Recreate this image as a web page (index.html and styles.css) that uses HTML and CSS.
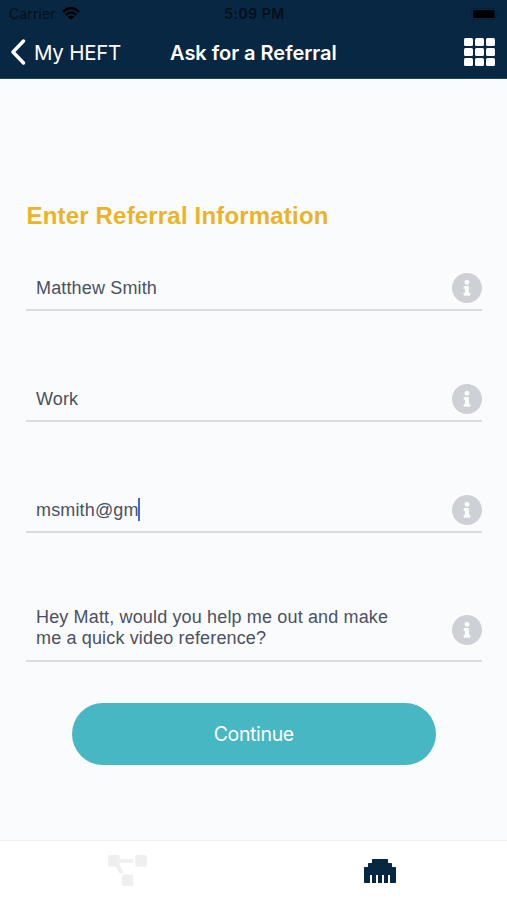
FILE: index.html
```
<!DOCTYPE html>
<html lang="en">
<head>
<meta charset="utf-8">
<title>Ask for a Referral</title>
<link rel="stylesheet" href="styles.css">
</head>
<body>
<svg width="0" height="0" class="sprite">
  <symbol id="info" viewBox="8 8 496 496"><path d="M256 8C119.043 8 8 119.083 8 256c0 136.997 111.043 248 248 248s248-111.003 248-248C504 119.083 392.957 8 256 8zm0 110c23.196 0 42 18.804 42 42s-18.804 42-42 42-42-18.804-42-42 18.804-42 42-42zm56 254c0 6.627-5.373 12-12 12h-88c-6.627 0-12-5.373-12-12v-24c0-6.627 5.373-12 12-12h12v-64h-12c-6.627 0-12-5.373-12-12v-24c0-6.627 5.373-12 12-12h64c6.627 0 12 5.373 12 12v100h12c6.627 0 12 5.373 12 12v24z"/></symbol>
</svg>
<header class="header">
  <div class="status">
    <div class="carrier"><span class="carrier-name">Carrier</span>
      <svg class="wifi" viewBox="0 0 18 13"><path d="M1 4.8Q9-2.3 17 4.8M3.7 7.8Q9 3.2 14.3 7.8" fill="none" stroke="#000" stroke-width="2.4"/><path d="M5.9 9.7Q9 7.2 12.1 9.7L9 12.8z"/></svg>
    </div>
    <span class="time">5:09 PM</span>
    <svg class="battery" viewBox="0 0 29 12"><rect x=".5" y=".5" width="24.5" height="11" rx="3" fill="none" stroke="#05203a"/><rect x="2" y="2" width="21.5" height="8" rx="1.5"/><path d="M26.5 4q2 2 0 4z" fill="#05203a"/></svg>
  </div>
  <nav class="nav">
    <a class="back"><svg class="chevron" viewBox="0 0 16 26"><path d="M13.5 2 3 13l10.5 11" fill="none" stroke="#fff" stroke-width="3.4" stroke-linecap="round" stroke-linejoin="round"/></svg><span class="back-label">My HEFT</span></a>
    <h1 class="title">Ask for a Referral</h1>
    <div class="grid-icon"><i></i><i></i><i></i><i></i><i></i><i></i><i></i><i></i><i></i></div>
  </nav>
</header>
<main class="main">
  <h2 class="heading">Enter Referral Information</h2>
  <div class="field"><span class="value">Matthew Smith</span><svg class="info"><use href="#info"/></svg></div>
  <div class="field"><span class="value">Work</span><svg class="info"><use href="#info"/></svg></div>
  <div class="field"><span class="value">msmith@gm</span><span class="caret"></span><svg class="info"><use href="#info"/></svg></div>
  <div class="field message"><span class="value">Hey Matt, would you help me out and make<br>me a quick video reference?</span><svg class="info"><use href="#info"/></svg></div>
  <button class="continue">Continue</button>
</main>
<footer class="tabs">
  <svg class="tab-diagram" viewBox="0 0 640 512"><path d="M384 320H256c-17.67 0-32 14.33-32 32v128c0 17.67 14.33 32 32 32h128c17.67 0 32-14.33 32-32V352c0-17.67-14.33-32-32-32zM192 32c0-17.67-14.33-32-32-32H32C14.33 0 0 14.33 0 32v128c0 17.67 14.33 32 32 32h95.72l73.16 128.04C211.98 300.98 232.4 288 256 288h.28L192 175.51V128h224V64H192V32zM608 0H480c-17.67 0-32 14.33-32 32v128c0 17.67 14.33 32 32 32h128c17.67 0 32-14.33 32-32V32c0-17.67-14.33-32-32-32z"/></svg>
  <svg class="tab-ethernet" viewBox="0 64 512 384"><path d="M496 192h-48v-48c0-8.8-7.2-16-16-16h-48V80c0-8.8-7.2-16-16-16H144c-8.8 0-16 7.2-16 16v48H80c-8.8 0-16 7.2-16 16v48H16c-8.8 0-16 7.2-16 16v224c0 8.8 7.2 16 16 16h80V320h32v128h64V320h32v128h64V320h32v128h64V320h32v128h80c8.8 0 16-7.2 16-16V208c0-8.8-7.2-16-16-16z"/></svg>
</footer>
</body>
</html>
```
FILE: styles.css
```
* { box-sizing: border-box; }
body {
  margin: 0;
  width: 507px;
  height: 900px;
  display: flex;
  flex-direction: column;
  overflow: hidden;
  background: #fafbfd;
  font-family: "Liberation Sans", Arial, sans-serif;
}
svg { display: block; flex: none; }
.sprite { position: absolute; }
.header {
  height: 79px;
  background: #082742;
  border-bottom: 1px solid #1f4660;
  font-family: Inter, sans-serif;
}
.status {
  height: 27px;
  display: grid;
  grid-template-columns: 1fr auto 1fr;
  align-items: center;
  padding: 0 7px 0 9px;
  font-size: 14px;
  line-height: 27px;
  color: #03101c;
}
.carrier { display: flex; align-items: center; gap: 5px; }
.carrier-name { width: 48px; white-space: nowrap; letter-spacing: 0.1px; }
.wifi { width: 18px; height: 13px; }
.time { font-weight: 600; font-size: 14px; letter-spacing: 0.5px; }
.battery { width: 29px; height: 12px; justify-self: end; }
.nav {
  height: 51px;
  display: grid;
  grid-template-columns: 160px auto 1fr;
  align-items: center;
  padding: 0 12px 0 10px;
  color: #fff;
}
.back { display: flex; align-items: center; gap: 8px; }
.chevron { width: 16px; height: 26px; margin-top: -1px; }
.back-label { font-size: 20.5px; letter-spacing: -0.25px; white-space: nowrap; }
.title { margin: 0; font-size: 20px; font-weight: 600; white-space: nowrap; letter-spacing: -0.02px; }
.grid-icon {
  justify-self: end;
  width: 31px;
  height: 28px;
  margin-top: -1px;
  display: grid;
  grid-template-columns: repeat(3, 1fr);
  gap: 1.5px;
}
.grid-icon i { background: #fff; border-radius: 1.5px; }
.main { flex: 1; padding: 122px 25px 0 26px; }
.heading {
  margin: 0 0 33px;
  height: 30px;
  padding-left: 0.5px;
  font-size: 24px;
  line-height: 30px;
  font-weight: 700;
  letter-spacing: 0.18px;
  color: #ebb328;
  white-space: nowrap;
}
.field {
  height: 47px;
  margin-bottom: 64px;
  padding: 2px 0.5px 0 10px;
  display: flex;
  align-items: center;
  border-bottom: 2px solid #dbdcde;
}
.value { margin-top: 2px; font-size: 18px; line-height: 21px; letter-spacing: 0.15px; color: #4b5160; white-space: nowrap; }
.caret { width: 2px; height: 23px; margin-left: -1px; background: #4267dd; }
.info { width: 30px; height: 30px; margin-left: auto; fill: #cdd1d5; }
.message { height: 65px; margin-bottom: 41px; }
.message .value { margin-top: -3px; }
.continue {
  display: block;
  width: 364.5px;
  height: 61.5px;
  margin: 0 0 0 45.5px;
  padding: 0;
  border: 0;
  border-radius: 31px;
  background: #46b7c3;
  color: #fff;
  font: 19.5px Inter, sans-serif;
  letter-spacing: -0.35px;
}
.tabs {
  height: 60px;
  display: grid;
  grid-template-columns: 1fr 1fr;
  justify-items: center;
  align-items: start;
  padding-top: 14px;
  background: #fff;
  border-top: 1px solid #f0f1f2;
}
.tab-diagram { width: 39px; height: 31px; margin-left: 2px; fill: #efefef; }
.tab-ethernet { width: 32px; height: 24px; margin-top: 4px; fill: #082742; }
```
